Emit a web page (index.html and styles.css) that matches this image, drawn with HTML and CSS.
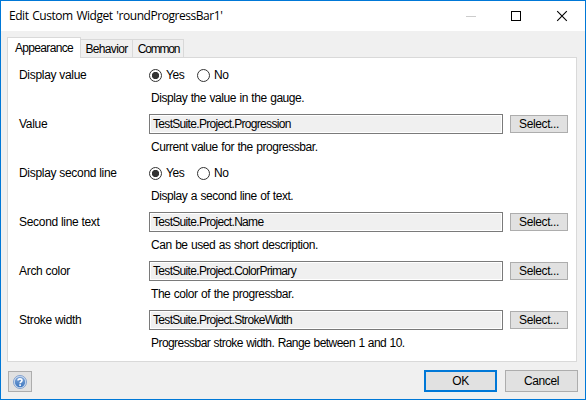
FILE: index.html
```html
<!DOCTYPE html>
<html lang="en">
<head>
<meta charset="utf-8">
<title>Edit Custom Widget</title>
<link rel="stylesheet" href="styles.css">
</head>
<body>
<div class="window">
  <header class="titlebar">
    <h1 class="title">Edit Custom Widget 'roundProgressBar1'</h1>
    <svg class="controls" width="102" height="12" viewBox="0 0 102 12" fill="none" shape-rendering="crispEdges">
      <path d="M0 6.5h10" stroke="#ccc"/>
      <rect x="45.5" y="1.5" width="9" height="9" stroke="#000"/>
      <path d="M91.2 1.2l9.6 9.6M100.8 1.2l-9.6 9.6" stroke="#000" stroke-width="1.1" shape-rendering="auto"/>
    </svg>
  </header>
  <nav class="tabs">
    <span class="tab active">Appearance</span>
    <span class="tab t-beh">Behavior</span>
    <span class="tab t-com">Common</span>
  </nav>
  <main class="panel">
    <section class="row">
      <span class="label">Display value</span>
      <div class="radios"><i class="radio on"></i><span class="yes">Yes</span><i class="radio"></i><span>No</span></div>
      <p class="desc">Display the value in the gauge.</p>
    </section>
    <section class="row">
      <span class="label">Value</span>
      <div class="field">TestSuite.Project.Progression</div>
      <button class="select">Select...</button>
      <p class="desc">Current value for the progressbar.</p>
    </section>
    <section class="row">
      <span class="label">Display second line</span>
      <div class="radios"><i class="radio on"></i><span class="yes">Yes</span><i class="radio"></i><span>No</span></div>
      <p class="desc">Display a second line of text.</p>
    </section>
    <section class="row">
      <span class="label">Second line text</span>
      <div class="field">TestSuite.Project.Name</div>
      <button class="select">Select...</button>
      <p class="desc">Can be used as short description.</p>
    </section>
    <section class="row">
      <span class="label">Arch color</span>
      <div class="field">TestSuite.Project.ColorPrimary</div>
      <button class="select">Select...</button>
      <p class="desc">The color of the progressbar.</p>
    </section>
    <section class="row">
      <span class="label">Stroke width</span>
      <div class="field">TestSuite.Project.StrokeWidth</div>
      <button class="select">Select...</button>
      <p class="desc long">Progressbar stroke width. Range between 1 and 10.</p>
    </section>
  </main>
  <footer class="footer">
    <button class="help" aria-label="Help">
      <svg width="14" height="14" viewBox="0 0 14 14" fill="none">
        <defs><linearGradient id="g" x2="0" y2="1"><stop stop-color="#7da4d6"/><stop offset="1" stop-color="#3f78c0"/></linearGradient></defs>
        <circle cx="7" cy="7" r="6.5" fill="#d3e1f3" stroke="#7799c9" stroke-width=".9"/>
        <circle cx="7" cy="7" r="5.2" fill="url(#g)"/>
        <path d="M5 5.6C5 3.3 9 3.3 9 5.5C9 6.8 7.1 6.8 7.1 8.3M7.1 9.3v1.6" stroke="#fff" stroke-width="1.6"/>
      </svg>
    </button>
    <button class="ok">OK</button>
    <button class="cancel">Cancel</button>
  </footer>
</div>
</body>
</html>
```

FILE: styles.css
```css
* { box-sizing: border-box; }
body { margin: 0; font: 12px/20px "Liberation Sans", Arial, sans-serif; letter-spacing: -0.45px; color: #000; }
.window {
  width: 586px; height: 400px;
  display: flex; flex-direction: column;
  background: #f0f0f0; border: 1px solid #0078d7;
}
.titlebar {
  height: 30px; flex: none; background: #fff;
  display: flex; align-items: center; justify-content: space-between;
  padding: 0 17px 0 8px;
}
.title { margin: 0; font: 12px/20px "Open Sans", sans-serif; letter-spacing: -0.45px; word-spacing: 1px; white-space: nowrap; }
.controls { display: block; margin-top: -1px; }
.tabs { height: 26px; flex: none; display: flex; align-items: flex-end; padding-left: 6px; }
.tab {
  height: 18px; line-height: 19px; text-align: center; letter-spacing: -0.65px;
  border: 1px solid #d9d9d9; border-bottom: 0; background: #f0f0f0; white-space: nowrap;
}
.t-beh { width: 52px; border-left: 0; }
.t-com { width: 51px; border-left: 0; padding-left: 1px; letter-spacing: -1.2px; }
.active { width: 74px; height: 21px; line-height: 20px; background: #fff; margin-bottom: -1px; position: relative; }
.panel {
  width: 570px; height: 305px; margin-left: 6px; flex: none;
  background: #fff; border: 1px solid #d9d9d9; padding: 7px 8px 0 11px;
}
.row {
  display: grid; height: 49px;
  grid-template-columns: 130px 354px 58px; grid-template-rows: 20px 29px;
  column-gap: 0;
}
.label { white-space: nowrap; letter-spacing: -0.3px; }
.radios { display: flex; align-items: center; }
.radio {
  width: 13px; height: 13px; border: 1px solid #333; border-radius: 50%;
  margin-right: 4px; background: #fff;
}
.radio.on { background: radial-gradient(circle, #333 3.3px, #fff 4px); }
.yes { width: 31px; }
.field {
  height: 20px; border: 1px solid #7a7a7a; background: #f0f0f0;
  box-shadow: inset 0 0 0 1px #fff; padding-left: 3px; line-height: 19px; white-space: nowrap;
  letter-spacing: -0.68px;
}
.desc { grid-column: 2 / 4; grid-row: 2; margin: 3px 0 0 2px; white-space: nowrap; word-spacing: 0.6px; }
.long { letter-spacing: -0.56px; }
button {
  font: inherit; letter-spacing: -0.4px; color: #000; padding: 0; border: 1px solid #adadad;
  background: #e1e1e1; white-space: nowrap;
}
.select { width: 58px; height: 18px; line-height: 16px; margin: 1px 0 0 7px; }
.footer { display: flex; padding: 8px 7px 0 7px; }
.help { width: 24px; height: 21px; margin-top: 1px; display: flex; align-items: center; justify-content: center; }
.ok, .cancel { width: 73px; height: 22px; line-height: 18px; }
.ok { margin-left: auto; margin-right: 8px; border: 2px solid #0078d7; }
```
